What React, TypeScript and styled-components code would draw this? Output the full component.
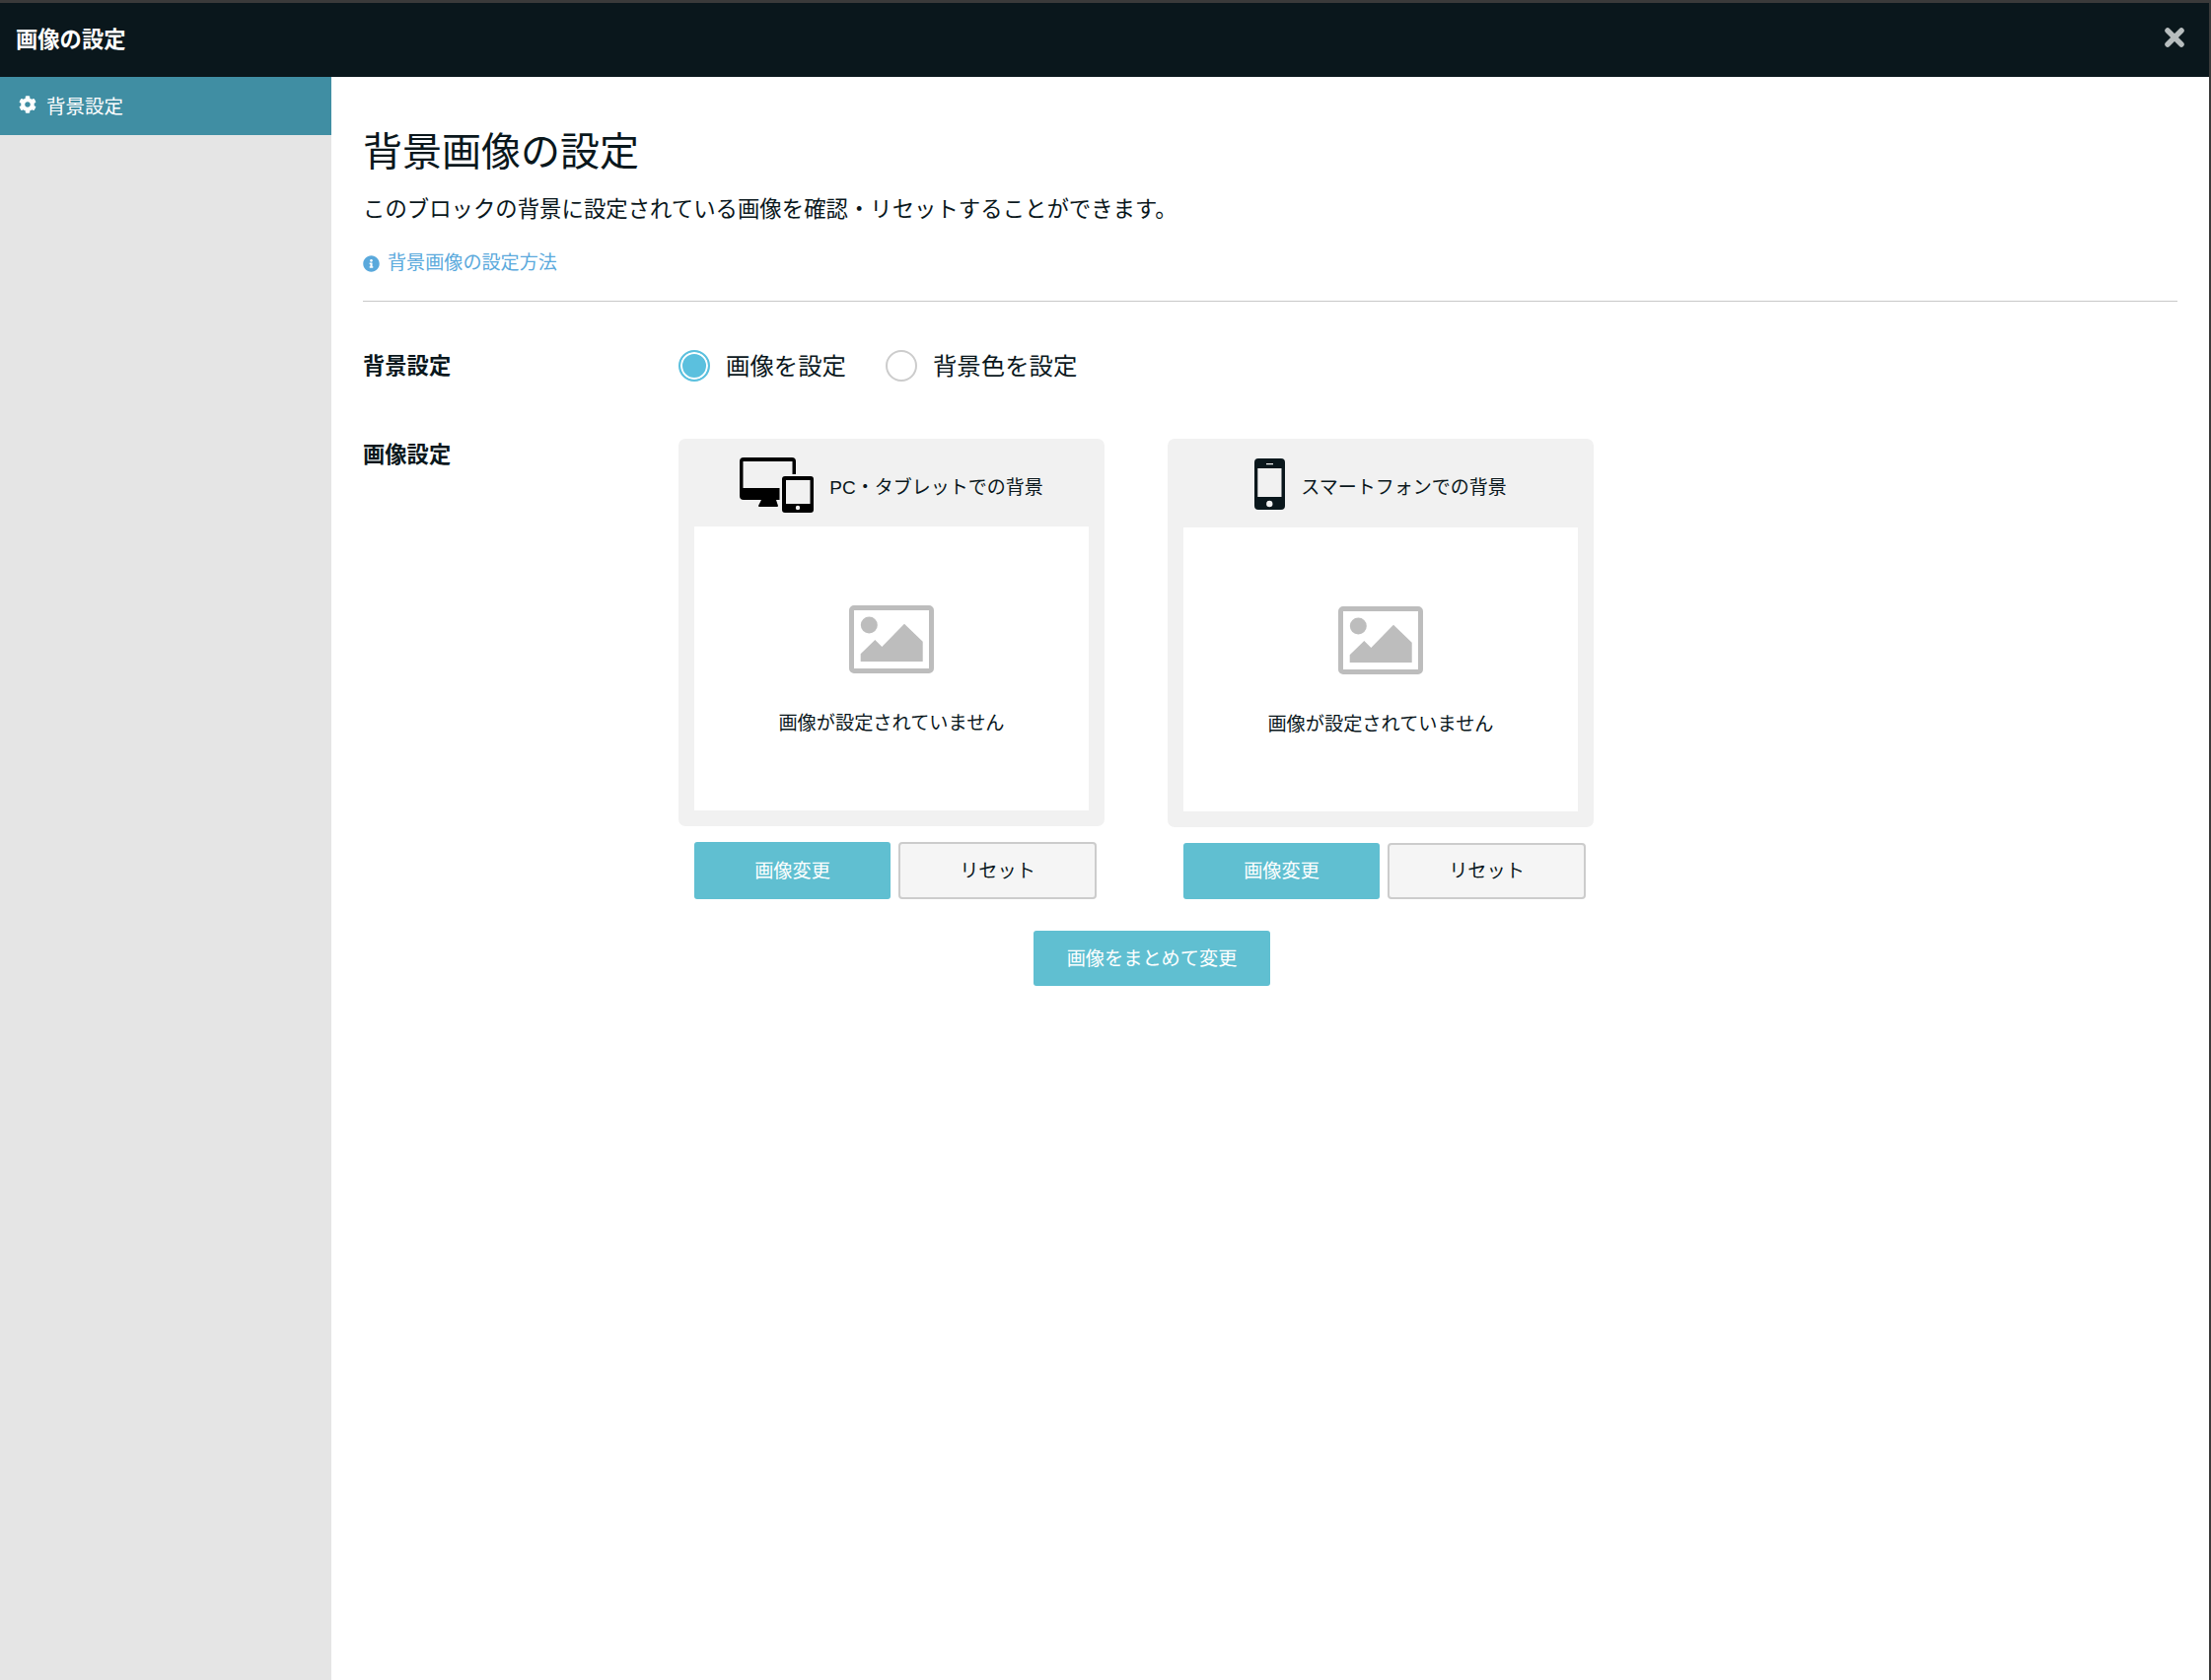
import styled, {createGlobalStyle} from 'styled-components'
import {FaCog, FaInfoCircle} from 'react-icons/fa'

const Global = createGlobalStyle`
    html, body {
        margin: 0;
        padding: 0;
        background: #3a3a3a;
    }
    body {
        font-family: "Liberation Sans", "Noto Sans CJK JP", sans-serif;
        color: #0a171c;
    }
`
const Shell = styled.div`
    box-sizing: border-box;
    height: 100vh;
    padding: 3px 2px 0 0;
    display: flex;
    flex-direction: column;
`
const TopBar = styled.header`
    box-sizing: border-box;
    height: 75px;
    flex: none;
    background: #0a171c;
    display: flex;
    align-items: center;
    justify-content: space-between;
    padding: 0 25px 5px 16px;
`
const TopTitle = styled.h1`
    margin: 0;
    font-size: 22.3px;
    font-weight: 700;
    color: #ffffff;
`
const Body = styled.div`
    flex: 1;
    display: flex;
    min-height: 0;
`
const Sidebar = styled.nav`
    width: 336px;
    flex: none;
    background: #e5e5e5;
`
const NavItem = styled.div`
    box-sizing: border-box;
    height: 59px;
    background: #408ea3;
    color: #ffffff;
    display: flex;
    align-items: center;
    gap: 10px;
    padding: 0 0 3px 19px;
    font-size: 19.5px;
`
const Main = styled.main`
    flex: 1;
    background: #ffffff;
    padding: 48px 32px 0;
`
const Title = styled.h2`
    margin: 0;
    font-size: 40px;
    line-height: 56px;
    font-weight: 400;
`
const Desc = styled.p`
    margin: 15px 0 0;
    font-size: 22.4px;
    line-height: 32px;
`
const HelpLink = styled.a`
    margin-top: 24px;
    display: flex;
    align-items: center;
    gap: 8px;
    font-size: 19.1px;
    line-height: 28px;
    color: #5aa9dc;
`
const Divider = styled.hr`
    margin: 24px 0 49px;
    border: 0;
    border-top: 1px solid #c8c8c8;
`
const Row = styled.section<{$gap?: number}>`
    display: flex;
    margin-top: ${(props) => props.$gap || 0}px;
`
const RowLabel = styled.div`
    width: 320px;
    flex: none;
    padding-top: 1px;
    font-size: 22.3px;
    font-weight: 700;
    line-height: 32px;
`
const RadioGroup = styled.div`
    display: flex;
    align-items: center;
    gap: 40px;
    height: 32px;
`
const RadioLabel = styled.label`
    display: flex;
    align-items: center;
    gap: 16px;
    font-size: 24.4px;
`
const RadioText = styled.span`
    line-height: 30px;
    padding-top: 2px;
`
const RadioMark = styled.span<{$on?: boolean}>`
    box-sizing: border-box;
    width: 32px;
    height: 32px;
    border-radius: 50%;
    border: 2px solid ${(props) => (props.$on ? '#5bc0de' : '#cccccc')};
    background: ${(props) => (props.$on ? '#5bc0de' : '#ffffff')};
    box-shadow: inset 0 0 0 2px #ffffff;
`
const CardArea = styled.div`
    display: flex;
    flex-direction: column;
`
const Cards = styled.div`
    display: flex;
    gap: 64px;
`
const CardCol = styled.div`
    width: 432px;
`
const Card = styled.div`
    background: #f1f1f1;
    border-radius: 7px;
    padding: 0 16px 16px;
`
const CardHead = styled.div<{$h: number}>`
    box-sizing: border-box;
    height: ${(props) => props.$h}px;
    padding-top: 5px;
    display: flex;
    align-items: center;
    justify-content: center;
    gap: 16px;
    font-size: 19px;
`
const PhoneSvg = styled.svg`
    margin-top: -3px;
`
const Preview = styled.div`
    box-sizing: border-box;
    height: 288px;
    background: #ffffff;
    padding-top: 80px;
    display: flex;
    flex-direction: column;
    align-items: center;
`
const PreviewText = styled.p`
    margin: 36px 0 0;
    font-size: 19.2px;
    line-height: 30px;
`
const BtnRow = styled.div<{$h: number}>`
    display: flex;
    gap: 8px;
    height: ${(props) => props.$h}px;
    margin-top: 16px;
    padding-left: 16px;
`
const Primary = styled.button`
    width: 199px;
    border: 0;
    border-radius: 3px;
    padding: 0 0 3px;
    background: #60bfd1;
    color: #ffffff;
    font: inherit;
    font-size: 19.2px;
`
const Reset = styled.button`
    width: 201px;
    box-sizing: border-box;
    border: 2px solid #cccccc;
    border-radius: 4px;
    padding: 0 0 3px;
    background: #f5f5f5;
    color: #0a171c;
    font: inherit;
    font-size: 19.2px;
`
const BulkBtn = styled(Primary)`
    width: 240px;
    height: 56px;
    margin: 32px 0 0 360px;
`

function CloseIcon() {
    return (
        <svg width="20" height="20" viewBox="0 0 20 20">
            <path d="M3 3 L17 17 M17 3 L3 17" stroke="#b7bdbe" strokeWidth="5.5" strokeLinecap="round" />
        </svg>
    )
}

function DevicesIcon() {
    return (
        <svg width="75" height="56" viewBox="0 0 75 56">
            <path d="M4 0H53a4 4 0 0 1 4 4V17H53.5V4H3.5V31H40.5V43H37L39 49a1 1 0 0 1-1 1H20a1 1 0 0 1-1-1L22 43H4a4 4 0 0 1-4-4V4a4 4 0 0 1 4-4z" fill="#000" />
            <path
                fillRule="evenodd"
                d="M46 19H72a3 3 0 0 1 3 3V53a3 3 0 0 1-3 3H46a3 3 0 0 1-3-3V22a3 3 0 0 1 3-3zM47 23V47H71.5V23zM59 48.8a2.2 2.2 0 1 0 0 4.4a2.2 2.2 0 1 0 0-4.4z"
                fill="#000"
            />
        </svg>
    )
}

function PhoneIcon() {
    return (
        <PhoneSvg width="31" height="52" viewBox="0 0 31 52">
            <path
                fillRule="evenodd"
                d="M4 0H27a4 4 0 0 1 4 4V48a4 4 0 0 1-4 4H4a4 4 0 0 1-4-4V4a4 4 0 0 1 4-4zM3.3 10V39H27.5V10zM12 5V6.3H19V5zM15.3 42.8a3.2 3.2 0 1 0 0 6.4a3.2 3.2 0 1 0 0-6.4z"
                fill="#0a171c"
            />
        </PhoneSvg>
    )
}

function PictureIcon() {
    return (
        <svg width="86" height="69" viewBox="0 0 86 69">
            <path
                fillRule="evenodd"
                d="M5 0H81a5 5 0 0 1 5 5V64a5 5 0 0 1-5 5H5a5 5 0 0 1-5-5V5a5 5 0 0 1 5-5zM5 5V64H81V5z"
                fill="#bdbdbd"
            />
            <circle cx="20.3" cy="20" r="8.5" fill="#bdbdbd" />
            <polygon points="11.7,57 74.7,57 74.7,36.7 56,18.7 33.3,42 26.3,35 11.7,49.3" fill="#bdbdbd" />
        </svg>
    )
}

function App() {
    return (
        <Shell>
            <Global />
            <TopBar>
                <TopTitle>画像の設定</TopTitle>
                <CloseIcon />
            </TopBar>
            <Body>
                <Sidebar>
                    <NavItem>
                        <FaCog size={18} />
                        <span>背景設定</span>
                    </NavItem>
                </Sidebar>
                <Main>
                    <Title>背景画像の設定</Title>
                    <Desc>このブロックの背景に設定されている画像を確認・リセットすることができます。</Desc>
                    <HelpLink>
                        <FaInfoCircle size={17} />
                        <span>背景画像の設定方法</span>
                    </HelpLink>
                    <Divider />
                    <Row>
                        <RowLabel>背景設定</RowLabel>
                        <RadioGroup>
                            <RadioLabel>
                                <RadioMark $on />
                                <RadioText>画像を設定</RadioText>
                            </RadioLabel>
                            <RadioLabel>
                                <RadioMark />
                                <RadioText>背景色を設定</RadioText>
                            </RadioLabel>
                        </RadioGroup>
                    </Row>
                    <Row $gap={57}>
                        <RowLabel>画像設定</RowLabel>
                        <CardArea>
                            <Cards>
                                <CardCol>
                                    <Card>
                                        <CardHead $h={89}>
                                            <DevicesIcon />
                                            <span>PC・タブレットでの背景</span>
                                        </CardHead>
                                        <Preview>
                                            <PictureIcon />
                                            <PreviewText>画像が設定されていません</PreviewText>
                                        </Preview>
                                    </Card>
                                    <BtnRow $h={58}>
                                        <Primary>画像変更</Primary>
                                        <Reset>リセット</Reset>
                                    </BtnRow>
                                </CardCol>
                                <CardCol>
                                    <Card>
                                        <CardHead $h={90}>
                                            <PhoneIcon />
                                            <span>スマートフォンでの背景</span>
                                        </CardHead>
                                        <Preview>
                                            <PictureIcon />
                                            <PreviewText>画像が設定されていません</PreviewText>
                                        </Preview>
                                    </Card>
                                    <BtnRow $h={57}>
                                        <Primary>画像変更</Primary>
                                        <Reset>リセット</Reset>
                                    </BtnRow>
                                </CardCol>
                            </Cards>
                            <div>
                                <BulkBtn>画像をまとめて変更</BulkBtn>
                            </div>
                        </CardArea>
                    </Row>
                </Main>
            </Body>
        </Shell>
    )
}

export default App
